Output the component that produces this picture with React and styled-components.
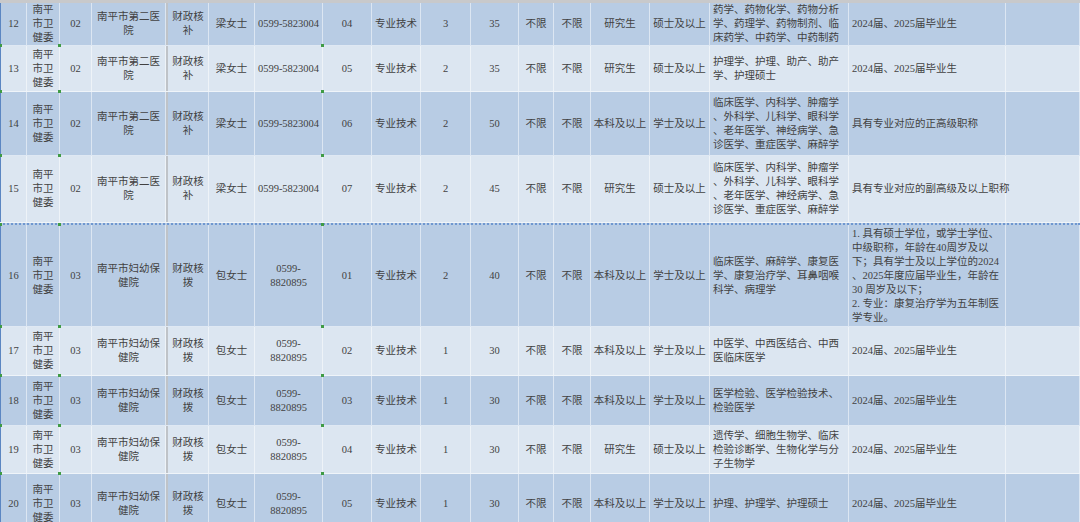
import React from "react";
import styled, { createGlobalStyle, css } from "styled-components";

const COLS = [27, 33, 32, 74, 43, 46, 68, 49, 49, 50, 48, 35, 37, 59, 60, 139, 157, 74];

const Global = createGlobalStyle`
  html, body { margin: 0; padding: 0; background: #dce6f1; overflow: hidden; }
  * { box-sizing: border-box; }
`;

const Sheet = styled.div`
  width: 1080px;
  height: 522px;
  overflow: hidden;
  display: flex;
  flex-direction: column;
  font-family: "Liberation Serif", "Noto Sans CJK SC", serif;
  font-size: 10.5px;
  line-height: 14px;
  color: #424242;
`;

const TopBand = styled.div`
  height: 3px;
  flex: none;
  background: #c8c9cb;
`;

const Row = styled.div`
  flex: none;
  display: grid;
  grid-template-columns: ${COLS.map((c) => c + "px").join(" ")};
  height: ${(p) => p.$h}px;
  background: ${(p) => (p.$dark ? "#b8cce4" : "#dce6f1")};
  border-bottom: 1px solid rgba(255, 255, 255, 0.55);
  ${(p) =>
    p.$dotted &&
    css`
      border-top: 2px dotted #6f97d0;
    `}
`;

const Cell = styled.div`
  position: relative;
  display: flex;
  align-items: center;
  justify-content: ${(p) => (p.$left ? "flex-start" : "center")};
  text-align: ${(p) => (p.$left ? "left" : "center")};
  padding-left: ${(p) => (p.$left ? "3px" : "0")};
  white-space: pre;
  border-right: 1px solid rgba(255, 255, 255, 0.5);
  ${(p) =>
    p.$sep &&
    css`
      border-left: 2px solid #bfc3c8;
    `}
  ${(p) =>
    p.$edge &&
    css`
      border-left: 1px solid #5b86c2;
    `}
  ${(p) =>
    p.$mark &&
    css`
      &::before {
        content: "";
        position: absolute;
        left: -2px;
        top: -2px;
        width: 3px;
        height: 3px;
        background: #3f9b45;
      }
    `}
`;

const AGENCY = "南平\n市卫\n健委";

const rows = [
  {
    h: 43, dark: true,
    c: ["12", AGENCY, "02", "南平市第二医\n院", "财政核\n补", "梁女士", "0599-5823004", "04", "专业技术", "3", "35", "不限", "不限", "研究生", "硕士及以上",
      "药学、药物化学、药物分析\n学、药理学、药物制剂、临\n床药学、中药学、中药制药", "2024届、2025届毕业生", ""],
  },
  {
    h: 46, dark: false, mark: true,
    c: ["13", AGENCY, "02", "南平市第二医\n院", "财政核\n补", "梁女士", "0599-5823004", "05", "专业技术", "2", "35", "不限", "不限", "研究生", "硕士及以上",
      "护理学、护理、助产、助产\n学、护理硕士", "2024届、2025届毕业生", ""],
  },
  {
    h: 64, dark: true, mark: true,
    c: ["14", AGENCY, "02", "南平市第二医\n院", "财政核\n补", "梁女士", "0599-5823004", "06", "专业技术", "2", "50", "不限", "不限", "本科及以上", "学士及以上",
      "临床医学、内科学、肿瘤学\n、外科学、儿科学、眼科学\n、老年医学、神经病学、急\n诊医学、重症医学、麻醉学", "具有专业对应的正高级职称", ""],
  },
  {
    h: 67, dark: false, mark: true,
    c: ["15", AGENCY, "02", "南平市第二医\n院", "财政核\n补", "梁女士", "0599-5823004", "07", "专业技术", "2", "45", "不限", "不限", "研究生", "硕士及以上",
      "临床医学、内科学、肿瘤学\n、外科学、儿科学、眼科学\n、老年医学、神经病学、急\n诊医学、重症医学、麻醉学", "具有专业对应的副高级及以上职称", ""],
  },
  {
    h: 104, dark: true, mark: true, dotted: true,
    c: ["16", AGENCY, "03", "南平市妇幼保\n健院", "财政核\n拨", "包女士", "0599-\n8820895", "01", "专业技术", "2", "40", "不限", "不限", "本科及以上", "学士及以上",
      "临床医学、麻醉学、康复医\n学、康复治疗学、耳鼻咽喉\n科学、病理学",
      "1. 具有硕士学位，或学士学位、\n中级职称，年龄在40周岁及以\n下；具有学士及以上学位的2024\n、2025年度应届毕业生，年龄在\n30 周岁及以下；\n2. 专业：康复治疗学为五年制医\n学专业。", ""],
  },
  {
    h: 49, dark: false, mark: true,
    c: ["17", AGENCY, "03", "南平市妇幼保\n健院", "财政核\n拨", "包女士", "0599-\n8820895", "02", "专业技术", "1", "30", "不限", "不限", "本科及以上", "学士及以上",
      "中医学、中西医结合、中西\n医临床医学", "2024届、2025届毕业生", ""],
  },
  {
    h: 50, dark: true, mark: true,
    c: ["18", AGENCY, "03", "南平市妇幼保\n健院", "财政核\n拨", "包女士", "0599-\n8820895", "03", "专业技术", "1", "30", "不限", "不限", "本科及以上", "学士及以上",
      "医学检验、医学检验技术、\n检验医学", "2024届、2025届毕业生", ""],
  },
  {
    h: 48, dark: false, mark: true,
    c: ["19", AGENCY, "03", "南平市妇幼保\n健院", "财政核\n拨", "包女士", "0599-\n8820895", "04", "专业技术", "1", "30", "不限", "不限", "研究生", "硕士及以上",
      "遗传学、细胞生物学、临床\n检验诊断学、生物化学与分\n子生物学", "2024届、2025届毕业生", ""],
  },
  {
    h: 60, dark: true, mark: true,
    c: ["20", AGENCY, "03", "南平市妇幼保\n健院", "财政核\n拨", "包女士", "0599-\n8820895", "05", "专业技术", "1", "30", "不限", "不限", "本科及以上", "学士及以上",
      "护理、护理学、护理硕士", "2024届、2025届毕业生", ""],
  },
];

const LEFT_COLS = new Set([15, 16]);
const MARK_COLS = new Set([0, 2, 7]);

export default function App() {
  return (
    <>
      <Global />
      <Sheet>
        <TopBand />
        {rows.map((r, i) => (
          <Row key={i} $h={r.h} $dark={r.dark} $dotted={r.dotted}>
            {r.c.map((txt, j) => (
              <Cell
                key={j}
                $left={LEFT_COLS.has(j)}
                $sep={j === 4}
                $edge={j === 0}
                $mark={r.mark && MARK_COLS.has(j)}
              >
                {txt}
              </Cell>
            ))}
          </Row>
        ))}
      </Sheet>
    </>
  );
}
